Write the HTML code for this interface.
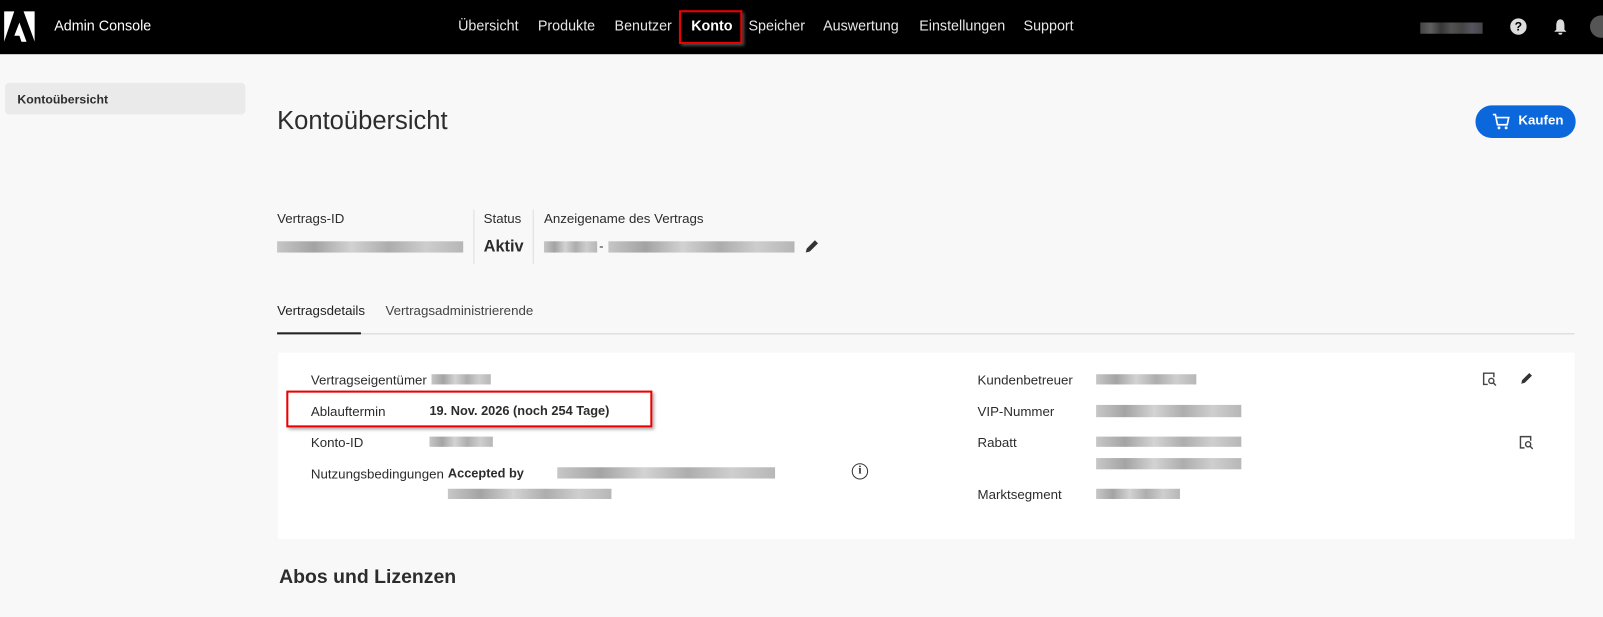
<!DOCTYPE html>
<html><head><meta charset="utf-8"><style>
*{margin:0;padding:0;box-sizing:border-box}
body{width:1603px;height:616px;overflow:hidden;background:#f8f8f8;font-family:"Liberation Sans",sans-serif;color:#2c2c2c;position:relative}
#w{position:absolute;left:0;top:0;width:1568px;height:603px;transform:scale(1.0225);transform-origin:0 0}
.a{position:absolute;white-space:nowrap}
.hdr{position:absolute;left:0;top:0;width:1600px;height:53px;background:#000}
.nav{color:#e6e6e6;font-size:14px;top:17px}
.blur{position:absolute;background:linear-gradient(90deg,#b9b9b9,#8d8d8d 20%,#c8c8c8 40%,#999 60%,#c2c2c2 80%,#a5a5a5);opacity:.8}
.lbl{font-size:13px;color:#2c2c2c}
</style></head><body><div id="w">
<div class="hdr"></div>
<svg class="a" style="left:4px;top:11px" width="30" height="30" viewBox="0 0 30 30"><path d="M0 0H10L0 30Z M19 0H30V30Z M15 11L22 30H17L15 24H10Z" fill="#fff"/></svg>
<div class="a" style="left:53px;top:17px;color:#fff;font-size:14px">Admin Console</div>
<div class="a nav" style="left:448px">Übersicht</div>
<div class="a nav" style="left:526px">Produkte</div>
<div class="a nav" style="left:601px">Benutzer</div>
<div class="a" style="left:664px;top:10px;width:62px;height:33px;border:2px solid #e00;box-shadow:2px 2px 3px #555"></div>
<div class="a nav" style="left:676px;color:#fff;font-weight:bold">Konto</div>
<div class="a nav" style="left:732px">Speicher</div>
<div class="a nav" style="left:805px">Auswertung</div>
<div class="a nav" style="left:899px">Einstellungen</div>
<div class="a nav" style="left:1001px">Support</div>
<div class="a" style="left:1389px;top:22px;width:61px;height:11px;background:linear-gradient(90deg,#555,#777,#444,#666,#555,#6a6a7a,#555);opacity:.8"></div>
<div class="a" style="left:1477px;top:18px;width:16px;height:16px;border-radius:50%;background:#ddd;color:#000;font-size:12px;font-weight:bold;text-align:center;line-height:16px">?</div>
<svg class="a" style="left:1518px;top:18px" width="16" height="17" viewBox="0 0 16 17"><path d="M8 1C5 1 4 4 4 7V11L2 13H14L12 11V7C12 4 11 1 8 1ZM6 14H10A2 2 0 0 1 6 14Z" fill="#ddd"/></svg>
<div class="a" style="left:1555px;top:15px;width:22px;height:22px;border-radius:50%;background:#555"></div>

<div class="a" style="left:5px;top:81px;width:235px;height:31px;background:#eaeaea;border-radius:4px"></div>
<div class="a" style="left:17px;top:90px;font-size:12px;font-weight:bold">Kontoübersicht</div>

<div class="a" style="left:271px;top:104px;font-size:25px;color:#2c2c2c">Kontoübersicht</div>
<div class="a" style="left:1443px;top:103px;width:98px;height:32px;border-radius:16px;background:#0a67dc"></div>
<svg class="a" style="left:1459px;top:110px" width="18" height="18" viewBox="0 0 18 18"><path d="M1 2H3.5L5.5 12H15L16.5 5H4.5" fill="none" stroke="#fff" stroke-width="1.6"/><circle cx="7" cy="15" r="1.4" fill="#fff"/><circle cx="14" cy="15" r="1.4" fill="#fff"/></svg>
<div class="a" style="left:1485px;top:110px;color:#fff;font-size:13px;font-weight:bold">Kaufen</div>

<div class="a lbl" style="left:271px;top:206px">Vertrags-ID</div>
<div class="blur" style="left:271px;top:236px;width:182px;height:11px"></div>
<div class="a" style="left:463px;top:205px;width:1px;height:53px;background:#ddd"></div>
<div class="a lbl" style="left:473px;top:206px">Status</div>
<div class="a" style="left:473px;top:233px;font-size:16px;font-weight:bold">Aktiv</div>
<div class="a" style="left:521px;top:205px;width:1px;height:53px;background:#ddd"></div>
<div class="a lbl" style="left:532px;top:206px">Anzeigename des Vertrags</div>
<div class="blur" style="left:532px;top:236px;width:52px;height:11px"></div>
<div class="a" style="left:586px;top:233px;font-size:13px">-</div>
<div class="blur" style="left:595px;top:236px;width:182px;height:11px"></div>
<svg class="a" style="left:786px;top:233px" width="16" height="16" viewBox="0 0 16 16"><path d="M2 14L3 10L11 2L14 5L6 13Z" fill="#333"/></svg>

<div class="a lbl" style="left:271px;top:296px;color:#222">Vertragsdetails</div>
<div class="a lbl" style="left:377px;top:296px;color:#444">Vertragsadministrierende</div>
<div class="a" style="left:271px;top:326px;width:1269px;height:1px;background:#d4d4d4"></div>
<div class="a" style="left:271px;top:325px;width:82px;height:2px;background:#222"></div>

<div class="a" style="left:272px;top:345px;width:1268px;height:182px;background:#fff"></div>
<div class="a lbl" style="left:304px;top:364px">Vertragseigentümer</div>
<div class="blur" style="left:422px;top:366px;width:58px;height:10px"></div>
<div class="a" style="left:280px;top:382px;width:358px;height:36px;border:2px solid #e00;box-shadow:2px 2px 3px #aaa"></div>
<div class="a lbl" style="left:304px;top:395px">Ablauftermin</div>
<div class="a" style="left:420px;top:395px;font-size:12.5px;font-weight:bold">19. Nov. 2026 (noch 254 Tage)</div>
<div class="a lbl" style="left:304px;top:425px">Konto-ID</div>
<div class="blur" style="left:420px;top:427px;width:62px;height:10px"></div>
<div class="a lbl" style="left:304px;top:456px">Nutzungsbedingungen</div>
<div class="a" style="left:438px;top:456px;font-size:12.5px;font-weight:bold">Accepted by</div>
<div class="blur" style="left:545px;top:457px;width:213px;height:11px"></div>
<div class="blur" style="left:438px;top:478px;width:160px;height:10px"></div>
<div class="a" style="left:833px;top:453px;width:16px;height:16px;border:1.5px solid #333;border-radius:50%;font-size:11px;font-weight:bold;text-align:center;line-height:13px;font-family:'Liberation Serif',serif">i</div>

<div class="a lbl" style="left:956px;top:364px">Kundenbetreuer</div>
<div class="blur" style="left:1072px;top:366px;width:98px;height:10px"></div>
<div class="a lbl" style="left:956px;top:395px">VIP-Nummer</div>
<div class="blur" style="left:1072px;top:396px;width:142px;height:12px"></div>
<div class="a lbl" style="left:956px;top:425px">Rabatt</div>
<div class="blur" style="left:1072px;top:427px;width:142px;height:10px"></div>
<div class="blur" style="left:1072px;top:448px;width:142px;height:11px"></div>
<div class="a lbl" style="left:956px;top:476px">Marktsegment</div>
<div class="blur" style="left:1072px;top:478px;width:82px;height:10px"></div>
<svg class="a" style="left:1449px;top:363px" width="15" height="15" viewBox="0 0 15 15"><path d="M12 6V2H2V13H6" fill="none" stroke="#444" stroke-width="1.4"/><circle cx="9.5" cy="9.5" r="2.5" fill="none" stroke="#444" stroke-width="1.4"/><path d="M11.5 11.5L14 14" stroke="#444" stroke-width="1.4"/></svg>
<svg class="a" style="left:1486px;top:363px" width="14" height="14" viewBox="0 0 16 16"><path d="M2 14L3 10L11 2L14 5L6 13Z" fill="#333"/></svg>
<svg class="a" style="left:1485px;top:425px" width="15" height="15" viewBox="0 0 15 15"><path d="M12 6V2H2V13H6" fill="none" stroke="#444" stroke-width="1.4"/><circle cx="9.5" cy="9.5" r="2.5" fill="none" stroke="#444" stroke-width="1.4"/><path d="M11.5 11.5L14 14" stroke="#444" stroke-width="1.4"/></svg>

<div class="a" style="left:273px;top:554px;font-size:19px;font-weight:bold;color:#2c2c2c">Abos und Lizenzen</div>
</div></body></html>
